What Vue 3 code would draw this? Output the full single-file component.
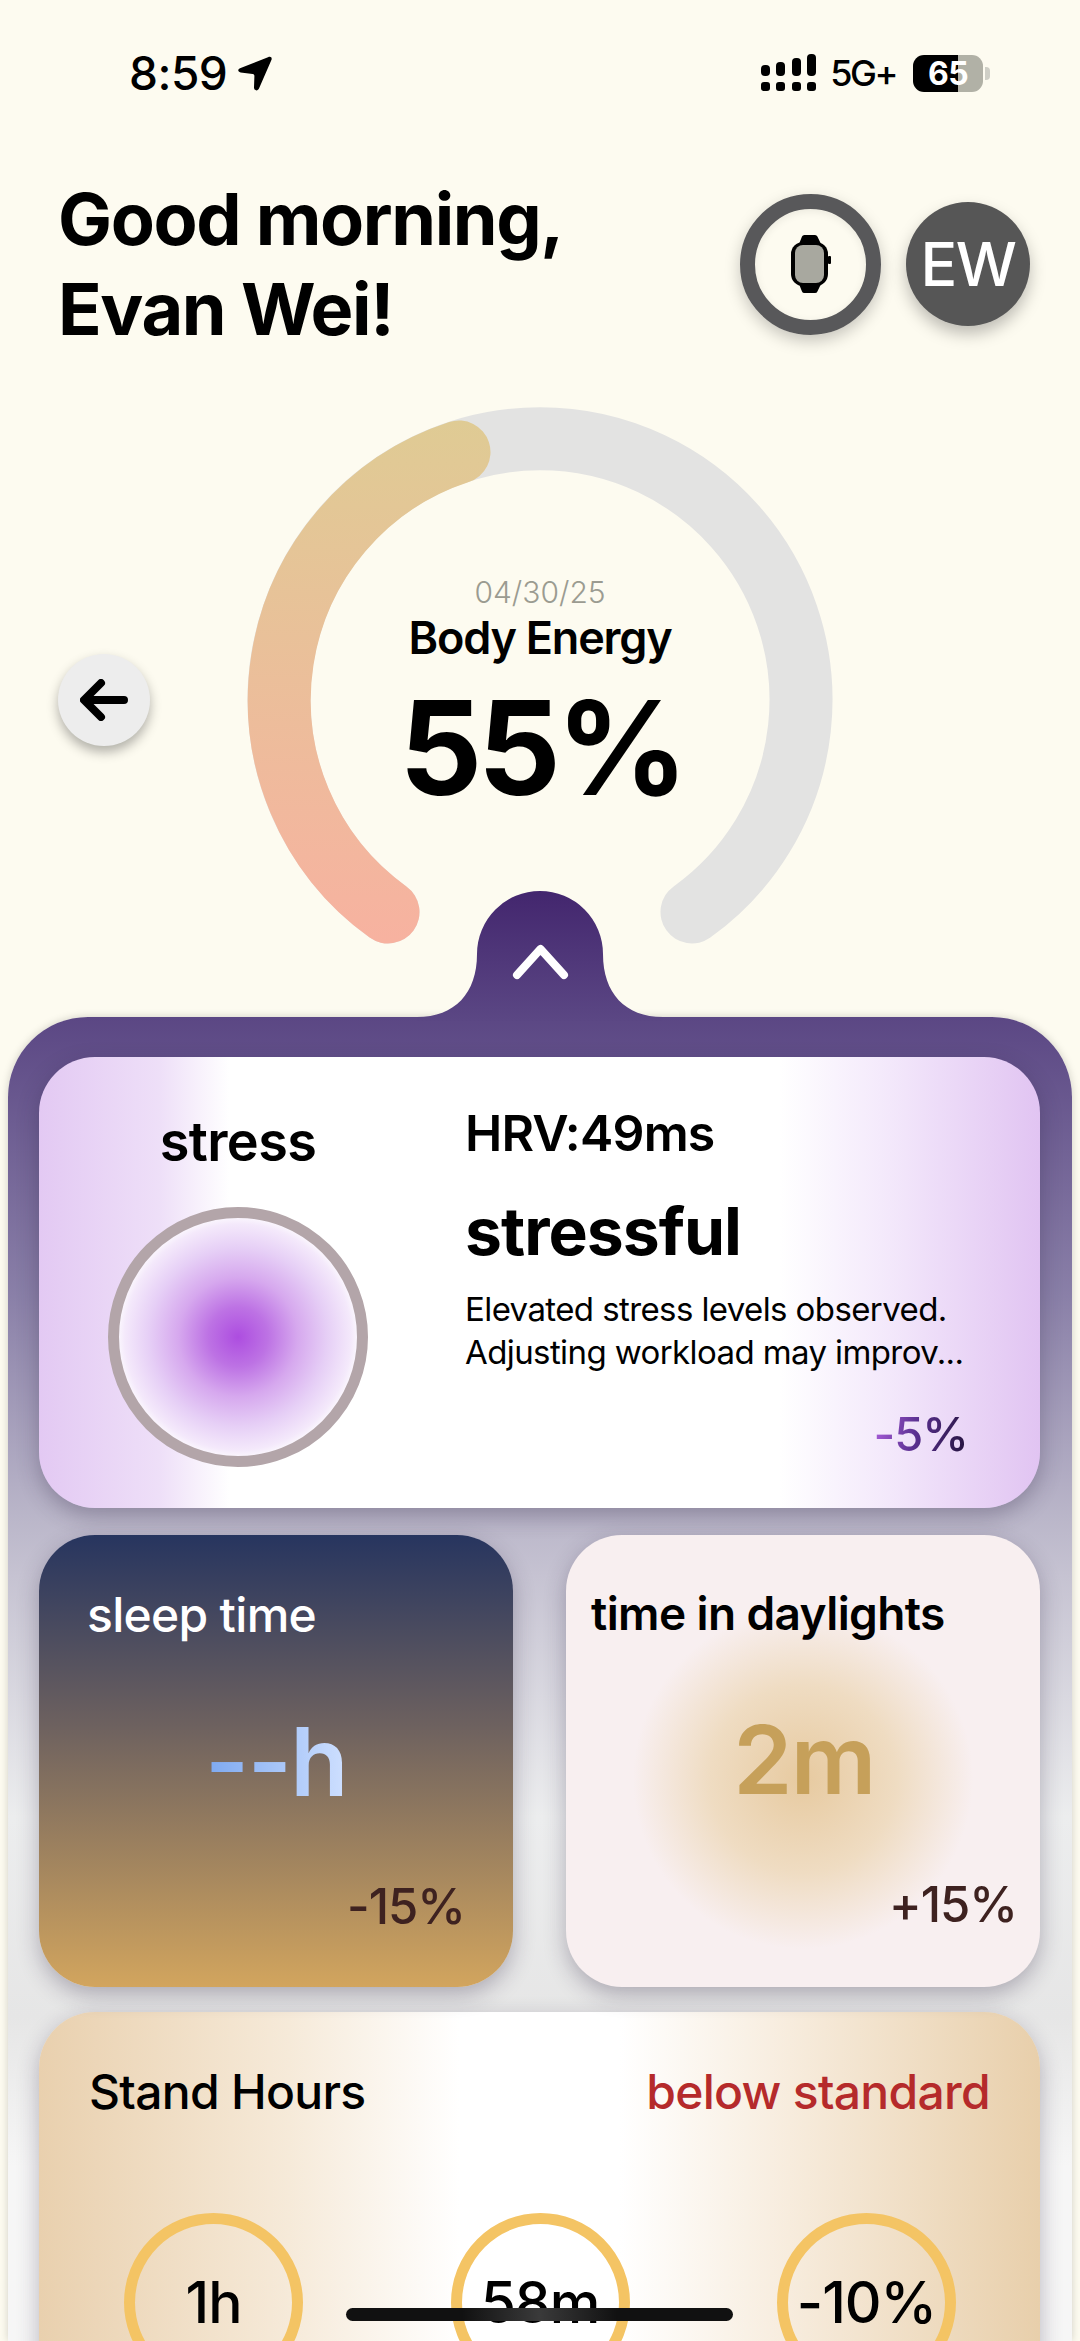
<script setup>
const standStats = ['1h', '58m', '-10%']
</script>

<template>
  <div class="phone">
    <div class="status">
      <div class="status-left">
        <span class="clock">8:59</span>
        <svg class="loc" width="34" height="35" viewBox="0 0 34 35">
          <path d="M30 1.2C32.6 0 34.4 1.4 33.4 4L21 32.6C19.8 35.4 16 34.8 16 31.6L16.4 20C16.4 18.8 15.8 18.2 14.6 18L2.6 16.4C-.2 16 -.6 13.4 2 12.2Z" fill="#000" />
        </svg>
      </div>
      <div class="status-right">
        <svg width="56" height="38" viewBox="0 0 56 38" fill="#000">
          <rect x="0" y="11" width="9" height="11" rx="4" />
          <rect x="15" y="8" width="9" height="14" rx="4" />
          <rect x="31" y="4" width="9" height="18" rx="4" />
          <rect x="46" y="0" width="9" height="22" rx="4" />
          <rect x="0" y="28" width="9" height="9" rx="3" />
          <rect x="15" y="28" width="9" height="9" rx="3" />
          <rect x="31" y="28" width="9" height="9" rx="3" />
          <rect x="46" y="28" width="9" height="9" rx="3" />
        </svg>
        <span class="net">5G+</span>
        <div class="battery">65</div>
        <span class="nub"></span>
      </div>
    </div>

    <header class="top">
      <h1 class="hello">Good morning,<br />Evan Wei!</h1>
      <div class="actions">
        <div class="watch-btn">
          <svg width="40" height="58" viewBox="0 0 40 58">
            <path d="M8 9L11 1.6Q11.6 0 13.4 0L24 0Q25.8 0 26.4 1.6L30 9Z" fill="#000" />
            <path d="M8 49L11 56.4Q11.6 58 13.4 58L24 58Q25.8 58 26.4 56.4L30 49Z" fill="#000" />
            <rect x="0" y="7" width="37" height="44" rx="12" fill="#000" />
            <rect x="37" y="21" width="3" height="8" rx="1" fill="#000" />
            <rect x="4" y="10" width="29" height="38" rx="8" fill="#a8a89f" />
          </svg>
        </div>
        <div class="avatar">EW</div>
      </div>
    </header>

    <section class="gauge-row">
      <button class="back">
        <svg width="48" height="42" viewBox="0 0 48 42" fill="none" stroke="#000" stroke-width="8" stroke-linecap="round" stroke-linejoin="round">
          <path d="M44 21H5M21 4L4 21L21 38" />
        </svg>
      </button>
      <div class="gauge">
        <svg class="gauge-svg" width="600" height="560" viewBox="0 0 600 560" fill="none">
          <defs>
            <linearGradient id="energy" gradientUnits="userSpaceOnUse" x1="0" y1="20" x2="0" y2="540">
              <stop offset="0" stop-color="#dfcb94" />
              <stop offset="1" stop-color="#f7b2a0" />
            </linearGradient>
          </defs>
          <path d="M148 512A261 261 0 1 1 452 512" stroke="#e3e3e2" stroke-width="63" stroke-linecap="round" />
          <path d="M148 512A261 261 0 0 1 219 52" stroke="url(#energy)" stroke-width="63" stroke-linecap="round" />
        </svg>
        <div class="gauge-text">
          <div class="date">04/30/25</div>
          <div class="energy-label">Body Energy</div>
          <div class="energy-value">55%</div>
        </div>
      </div>
    </section>

    <main class="sheet">
      <svg class="tab" width="260" height="130" viewBox="0 0 260 130">
        <defs>
          <linearGradient id="tabFill" x1="0" y1="0" x2="0" y2="1">
            <stop offset="0" stop-color="#43266e" />
            <stop offset="1" stop-color="#5b4784" />
          </linearGradient>
        </defs>
        <path d="M7 126C45 126 67 102 67 63A63 63 0 0 1 193 63C193 102 215 126 253 126V130H7Z" fill="url(#tabFill)" />
        <path d="M107 84L130.5 58L154 84" fill="none" stroke="#fff" stroke-width="8" stroke-linecap="round" stroke-linejoin="round" />
      </svg>

      <article class="card stress-card">
        <div class="stress-left">
          <div class="stress-title">stress</div>
          <div class="stress-orb"></div>
        </div>
        <div class="stress-right">
          <div class="hrv">HRV:49ms</div>
          <div class="stress-state">stressful</div>
          <p class="stress-desc">Elevated stress levels observed.<br />Adjusting workload may improv...</p>
          <div class="stress-pct">-5%</div>
        </div>
      </article>

      <div class="pair">
        <article class="card sleep-card">
          <div class="small-title">sleep time</div>
          <div class="big sleep-val">--h</div>
          <div class="pct">-15%</div>
        </article>
        <article class="card day-card">
          <div class="small-title day-title">time in daylights</div>
          <div class="big day-val">2m</div>
          <div class="pct">+15%</div>
        </article>
      </div>

      <article class="card stand-card">
        <div class="stand-head">
          <span>Stand Hours</span>
          <span class="below">below standard</span>
        </div>
        <div class="stand-row">
          <div v-for="s in standStats" :key="s" class="stand-circle">{{ s }}</div>
        </div>
      </article>
    </main>

    <div class="home-bar"></div>
  </div>
</template>

<style>
body {
  background: #fdfbf0;
}
</style>

<style scoped>
.phone {
  position: relative;
  width: 1080px;
  height: 2341px;
  overflow: hidden;
  background: #fdfbf0;
  color: #000;
  font-family: Inter, "Liberation Sans", sans-serif;
}

.status {
  height: 146px;
  display: flex;
  align-items: center;
  justify-content: space-between;
  padding: 0 90px 0 129px;
  box-sizing: border-box;
}

.status-left,
.status-right {
  display: flex;
  align-items: center;
}

.clock {
  font-size: 46px;
  font-weight: 500;
  letter-spacing: -0.5px;
}

.loc {
  margin-left: 11px;
}

.net {
  margin-left: 13px;
  font-size: 36px;
  font-weight: 500;
  letter-spacing: -2.5px;
}

.battery {
  margin-left: 17px;
  width: 70px;
  height: 37px;
  border-radius: 11px;
  background: linear-gradient(90deg, #000 64%, #b1b1a6 64%);
  color: #fff;
  font-size: 32px;
  font-weight: 700;
  line-height: 37px;
  text-align: center;
  letter-spacing: -0.5px;
}

.nub {
  width: 5px;
  height: 13px;
  margin-left: 2px;
  border-radius: 0 4px 4px 0;
  background: #cfcfc6;
}

.top {
  display: flex;
  justify-content: space-between;
  align-items: center;
  padding: 28px 50px 2px 58px;
}

.hello {
  margin: 0;
  font-size: 72px;
  font-weight: 700;
  line-height: 90px;
  letter-spacing: -1.4px;
}

.actions {
  display: flex;
  align-items: center;
  gap: 25px;
}

.watch-btn {
  width: 141px;
  height: 141px;
  box-sizing: border-box;
  border: 15px solid #58585a;
  border-radius: 50%;
  display: flex;
  align-items: center;
  justify-content: center;
  box-shadow: 0 6px 16px rgba(0, 0, 0, 0.22), inset 0 2px 8px rgba(0, 0, 0, 0.08);
}

.avatar {
  width: 124px;
  height: 124px;
  border-radius: 50%;
  background: #565656;
  color: #fff;
  font-size: 61px;
  font-weight: 500;
  line-height: 124px;
  text-align: center;
  letter-spacing: -1.5px;
  box-shadow: 0 8px 16px rgba(0, 0, 0, 0.25);
}

.gauge-row {
  height: 617px;
  margin-top: 44px;
  display: grid;
  grid-template-columns: 240px 600px 240px;
}

.back {
  width: 92px;
  height: 92px;
  margin: 254px 0 0 58px;
  padding: 0;
  border: none;
  border-radius: 50%;
  background: #ededed;
  display: flex;
  align-items: center;
  justify-content: center;
  box-shadow: 0 6px 12px rgba(0, 0, 0, 0.3);
}

.gauge {
  display: grid;
  align-content: start;
}

.gauge-svg,
.gauge-text {
  grid-area: 1 / 1;
}

.gauge-text {
  padding-top: 174px;
  text-align: center;
}

.date {
  color: #9b9b91;
  font-size: 30px;
  font-weight: 300;
  line-height: 36px;
}

.energy-label {
  margin-top: 1px;
  font-size: 45px;
  font-weight: 600;
  line-height: 54px;
  letter-spacing: -1.2px;
}

.energy-value {
  margin: 18px 0 0 3px;
  font-size: 130px;
  font-weight: 700;
  line-height: 130px;
  letter-spacing: -4.5px;
}

.sheet {
  position: relative;
  height: 1324px;
  margin: 0 8px;
  padding: 40px 32px 0 31px;
  box-sizing: border-box;
  border-radius: 80px 80px 0 0;
  background: linear-gradient(180deg, #5b4784 0, #8a80a8 280px, #bab6c9 500px, #c6c3d2 560px, #ecedee 800px, #e6e6e6 1000px, #f6f6f6 1150px);
  box-shadow: 0 0 8px rgba(0, 0, 0, 0.18);
}

.tab {
  position: absolute;
  left: 402px;
  top: -126px;
}

.card {
  border-radius: 56px;
  box-shadow: 0 8px 22px rgba(40, 30, 60, 0.3);
}

.stress-card {
  height: 451px;
  display: flex;
  background: linear-gradient(90deg, #e3c9f3 0, #eedff8 12%, #fff 19%, #fff 74%, #f3e8fb 85%, #e1c4f2 100%);
}

.stress-left {
  flex: 0 0 398px;
  padding-top: 55px;
  display: flex;
  flex-direction: column;
  align-items: center;
}

.stress-title {
  font-size: 54px;
  font-weight: 600;
  line-height: 60px;
  letter-spacing: -0.6px;
}

.stress-orb {
  width: 260px;
  height: 260px;
  margin-top: 35px;
  box-sizing: border-box;
  border: 11px solid #b3a5a9;
  border-radius: 50%;
  background: radial-gradient(circle closest-side, #ad4de0 0, #bd72e4 25%, #d6a8ee 50%, #e6cff6 75%, #f4e9fb 95%, #faf5fd 100%);
}

.stress-right {
  flex: 1;
  min-width: 0;
  padding: 48px 72px 0 28px;
}

.hrv {
  font-size: 50px;
  font-weight: 600;
  line-height: 56px;
  letter-spacing: -0.8px;
}

.stress-state {
  margin-top: 31px;
  font-size: 66px;
  font-weight: 700;
  line-height: 78px;
  letter-spacing: -1px;
}

.stress-desc {
  margin: 18px 0 0;
  font-size: 33px;
  line-height: 43px;
  letter-spacing: -0.6px;
  white-space: nowrap;
}

.stress-pct {
  width: fit-content;
  margin-top: 33px;
  margin-left: auto;
  font-size: 47px;
  font-weight: 500;
  line-height: 54px;
  text-align: right;
  letter-spacing: -1px;
  background: linear-gradient(100deg, #ad60de 0, #5a3090 45%, #22123a 100%);
  -webkit-background-clip: text;
  background-clip: text;
  color: transparent;
}

.pair {
  display: grid;
  grid-template-columns: 474px 474px;
  gap: 53px;
  margin-top: 27px;
}

.sleep-card,
.day-card {
  height: 452px;
  padding: 53px 48px 0 48px;
  box-sizing: border-box;
}

.sleep-card {
  background: linear-gradient(180deg, #27355f 0, #6d615f 42%, #d2a55e 100%);
  color: #fff;
}

.day-card {
  padding: 53px 23px 0 25px;
  background: radial-gradient(circle 170px at 50% 54%, #e7caa0 0, #efdcc2 55%, #f8eff0 100%), #f8eff0;
}

.small-title {
  font-size: 48px;
  font-weight: 500;
  line-height: 54px;
  letter-spacing: -0.7px;
}

.day-title {
  margin-top: -2px;
  margin-bottom: 2px;
  font-size: 46px;
  font-weight: 600;
  letter-spacing: -0.6px;
}

.big {
  width: fit-content;
  margin: 70px auto 0;
  font-size: 95px;
  font-weight: 600;
  line-height: 100px;
  letter-spacing: -1.5px;
}

.sleep-val {
  background: linear-gradient(90deg, #7ca8f0 0, #cfe0ff 100%);
  -webkit-background-clip: text;
  background-clip: text;
  color: transparent;
}

.day-val {
  color: #c6a05a;
}

.pct {
  margin-top: 68px;
  color: #3e2220;
  font-size: 49px;
  font-weight: 500;
  line-height: 54px;
  text-align: right;
  letter-spacing: -1px;
}

.stand-card {
  margin-top: 25px;
  height: 500px;
  padding-top: 53px;
  box-sizing: border-box;
  background: linear-gradient(90deg, #e9d0ae 0, #f6ead9 25%, #fff 42%, #fff 58%, #f7ecdd 75%, #e8cfab 100%);
}

.stand-head {
  display: flex;
  justify-content: space-between;
  padding: 0 50px 0 50px;
  font-size: 48px;
  font-weight: 500;
  line-height: 54px;
  letter-spacing: -0.7px;
}

.below {
  color: #b52a2b;
}

.stand-row {
  display: flex;
  justify-content: space-between;
  margin-top: 94px;
  padding: 0 84px 0 85px;
}

.stand-circle {
  width: 179px;
  height: 179px;
  box-sizing: border-box;
  border: 11px solid #f4c464;
  border-radius: 50%;
  display: flex;
  align-items: center;
  justify-content: center;
  font-size: 57px;
  font-weight: 500;
  letter-spacing: -1px;
}

.home-bar {
  position: absolute;
  left: 346px;
  bottom: 20px;
  width: 387px;
  height: 13px;
  border-radius: 7px;
  background: linear-gradient(90deg, #111 0, #111 30%, #3a3a3a 50%, #111 70%, #111 100%);
}
</style>
